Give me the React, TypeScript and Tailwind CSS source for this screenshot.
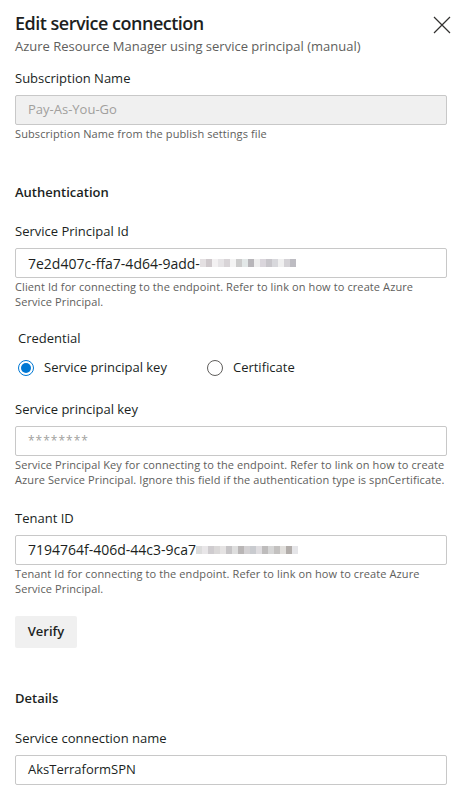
import React from "react";

const font = { fontFamily: "'Segoe UI', 'Open Sans', 'Noto Sans', sans-serif" };

function Blur({ cells }: { cells: string[] }) {
  return (
    <span className="inline-flex h-[8px] align-middle">
      {cells.map((c, i) => (
        <span key={i} className={`h-full w-[6px] ${c}`} />
      ))}
    </span>
  );
}

const blur1 = [
  "bg-[#e4e0e2]",
  "bg-[#cfc9cc]",
  "bg-[#f3f1f2]",
  "bg-[#e6e4e6]",
  "bg-[#d8d4d7]",
  "bg-[#f4f4f4]",
  "bg-[#cccccc]",
  "bg-[#e3e8e8]",
  "bg-[#b8b6ba]",
  "bg-[#eeeeee]",
  "bg-[#dad6dc]",
  "bg-[#c8c6cb]",
  "bg-[#d8d8dc]",
  "bg-[#f0f0f0]",
  "bg-[#d4d2d6]",
  "bg-[#bdbcc2]",
];
const blur2 = [
  "bg-[#dcdcdc]",
  "bg-[#e8e6e8]",
  "bg-[#cfcccf]",
  "bg-[#dad8d8]",
  "bg-[#e5e3e3]",
  "bg-[#c6c4c6]",
  "bg-[#dedede]",
  "bg-[#b9b6b6]",
  "bg-[#d3d1d3]",
  "bg-[#c9cbcf]",
  "bg-[#dfdde0]",
  "bg-[#bebcbc]",
  "bg-[#d6d6d6]",
  "bg-[#c3c1c0]",
  "bg-[#e1dfdc]",
  "bg-[#b2adaa]",
  "bg-[#e5e5e8]",
];

function Label({ children, className = "" }: { children: React.ReactNode; className?: string }) {
  return <div className={`text-[13px] leading-[20px] text-[#201f1e] ${className}`}>{children}</div>;
}

function Input({ children, disabled = false }: { children: React.ReactNode; disabled?: boolean }) {
  return (
    <div
      className={`mt-[7px] flex h-[30px] items-center rounded-[2px] border border-[#c8c8c8] px-[12px] text-[13px] ${
        disabled ? "bg-[#f0f0f0] text-[#a19f9d]" : "bg-white text-[#201f1e]"
      }`}
    >
      {children}
    </div>
  );
}

function Help({ children }: { children: React.ReactNode }) {
  return <div className="mt-[1px] text-[11px] leading-[15px] tracking-[0.1px] text-[#605e5c]">{children}</div>;
}

export default function App() {
  return (
    <div style={font} className="min-h-[800px] w-[467px] bg-white pl-[15px] pr-[20px] pt-[8px]">
      <div className="mr-[-4px] flex items-start justify-between">
        <div>
          <div className="text-[18px] font-semibold leading-[30px] tracking-[-0.5px] text-[#201f1e]">
            Edit service connection
          </div>
          <div className="text-[13px] leading-[16px] text-[#605e5c]">
            Azure Resource Manager using service principal (manual)
          </div>
        </div>
        <svg width="18" height="18" viewBox="0 0 18 18" className="mt-[8px]">
          <path d="M1 1L17 17M17 1L1 17" stroke="#323130" strokeWidth="1.2" fill="none" />
        </svg>
      </div>

      <Label className="mt-[14px]">Subscription Name</Label>
      <Input disabled>Pay-As-You-Go</Input>
      <Help>Subscription Name from the publish settings file</Help>

      <Label className="mt-[41px] font-semibold">Authentication</Label>

      <Label className="mt-[19px]">Service Principal Id</Label>
      <Input>
        <span className="text-[14px]">7e2d407c-ffa7-4d64-9add-</span>
        <Blur cells={blur1} />
      </Input>
      <Help>
        Client Id for connecting to the endpoint. Refer to link on how to create Azure
        <br />
        Service Principal.
      </Help>

      <Label className="mt-[19px] pl-[3px]">Credential</Label>
      <div className="mt-[10px] flex items-center pl-[3px] text-[13px] text-[#201f1e]">
        <span className="flex h-[16px] w-[16px] items-center justify-center rounded-full border-[1.5px] border-[#0078d4]">
          <span className="h-[10px] w-[10px] rounded-full bg-[#0078d4]" />
        </span>
        <span className="ml-[10px]">Service principal key</span>
        <span className="ml-[40px] h-[16px] w-[16px] rounded-full border border-[#605e5c]" />
        <span className="ml-[10px]">Certificate</span>
      </div>

      <Label className="mt-[21px]">Service principal key</Label>
      <Input>
        <span className="text-[12px] tracking-[1px] text-[#a19f9d]">********</span>
      </Input>
      <Help>
        Service Principal Key for connecting to the endpoint. Refer to link on how to create
        <br />
        Azure Service Principal. Ignore this field if the authentication type is spnCertificate.
      </Help>

      <Label className="mt-[21px]">Tenant ID</Label>
      <Input>
        <span className="text-[14px]">7194764f-406d-44c3-9ca7</span>
        <Blur cells={blur2} />
      </Input>
      <Help>
        Tenant Id for connecting to the endpoint. Refer to link on how to create Azure
        <br />
        Service Principal.
      </Help>

      <button className="mt-[20px] h-[32px] w-[62px] rounded-[2px] bg-[#f0f0f0] text-[13px] font-semibold text-[#201f1e]">
        Verify
      </button>

      <Label className="mt-[40px] font-semibold">Details</Label>
      <Label className="mt-[20px]">Service connection name</Label>
      <Input>AksTerraformSPN</Input>
    </div>
  );
}
